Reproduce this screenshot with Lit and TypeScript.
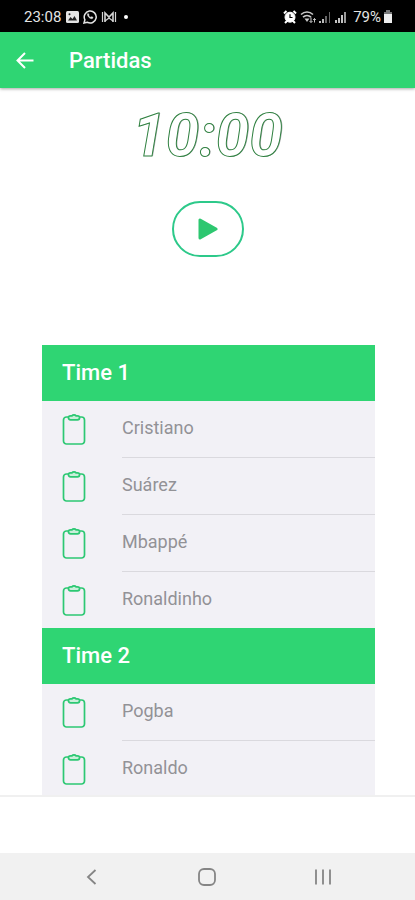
import { LitElement, html, css } from "lit";
import { customElement, property, state } from "lit/decorators.js";

interface Team {
  name: string;
  players: string[];
}

@customElement("status-bar")
class StatusBar extends LitElement {
  static styles = css`
    :host {
      display: flex;
      justify-content: space-between;
      align-items: center;
      flex: none;
      height: 32px;
      padding: 2px 22px 0 24px;
      box-sizing: border-box;
      background: #000;
      color: #e4e4e4;
      font-size: 15px;
      line-height: 16px;
    }
    .group {
      display: flex;
      align-items: center;
      gap: 4px;
    }
    .tight {
      gap: 2px;
    }
    svg {
      display: block;
    }
  `;

  render() {
    return html`
      <div class="group">
        <span>23:08</span>
        <svg width="14" height="14" viewBox="0 0 14 14">
          <rect x="1" y="1" width="13" height="12" rx="1.500" fill="#e4e4e4" />
          <path d="M3 10.500 5.500 7l2 2 2-3 2.500 4.500z" fill="#222" />
          <circle cx="4.500" cy="4.200" r="1" fill="#222" />
        </svg>
        <svg width="14" height="14" viewBox="0 0 14 14" fill="none" stroke="#e4e4e4">
          <path d="M1 13l.9-3.200A6 6 0 1 1 4.200 12.200z" stroke-width="1.500" />
          <path d="M4.600 3.800c.5-.6 1-.2 1.400 1.200-.8.8.9 2.500 2 2.100.8-.6 2 0 2 .7-1 2.600-6.400-1-5.400-4z" fill="#e4e4e4" stroke="#e4e4e4" stroke-width="0.500" />
        </svg>
        <svg width="16" height="12" viewBox="0 0 16 12" fill="none" stroke="#d4d4d4">
          <path d="M4 11V2l4 4 4-4v9" stroke-width="1.600" />
          <path d="M1.500 1v10M14.500 1v10M4 10l4-3 4 3" stroke-width="1.200" />
        </svg>
        <svg width="10" height="6" viewBox="0 0 10 6"><circle cx="5" cy="3" r="2" fill="#fff" /></svg>
      </div>
      <div class="group tight">
        <svg width="14" height="14" viewBox="0 0 14 14" fill="none" stroke="#fff">
          <circle cx="7" cy="7.200" r="5" fill="#fff" />
          <path d="M1 3.500 3.500 1M13 3.500 10.500 1M2 13l2-2M12 13 10 11" stroke-width="2" />
          <path d="M7 4.200v3.300h2.500" stroke="#000" stroke-width="1.200" />
        </svg>
        <svg width="18" height="14" viewBox="0 0 18 14" fill="none" stroke="#c8c8c8">
          <path d="M2 4.500c3.500-3.300 8.500-3.300 12 0M4 7.200c2.300-2.200 5.700-2.200 8 0" stroke-width="1.600" />
          <path d="M5.500 8.500h5L8 12z" fill="#c8c8c8" stroke="none" />
          <path d="M12 7.500v5M10.500 11l1.500 1.500 1.500-1.500M15.500 12.500v-4M14.200 10l1.300-1.500 1.300 1.500" />
        </svg>
        <svg width="12" height="12" viewBox="0 0 12 12">
          <path d="M0 10h2v2H0zM3 8h2v4H3z" fill="#bbb" />
          <path d="M6 5h2v7H6zM10 1h1v11h-1z" fill="#666" />
        </svg>
        <svg width="14" height="12" viewBox="0 0 14 12">
          <path d="M2 9h2v3H2zM5 7h2v5H5zM8 4h2v8H8z" fill="#c4c4c4" />
          <path d="M11 1h2v11h-2z" fill="#999" />
        </svg>
        <span>&nbsp;79%</span>
        <svg width="10" height="14" viewBox="0 0 10 14">
          <path d="M3 0h4v2h2v3H1V2h2z" fill="#777" />
          <path d="M1 4h8v9H1z" fill="#eee" />
        </svg>
      </div>
    `;
  }
}

@customElement("team-list")
class TeamList extends LitElement {
  @property({ attribute: false }) team!: Team;

  static styles = css`
    :host {
      display: block;
      background: #f2f1f6;
    }
    h2 {
      display: flex;
      align-items: center;
      height: 56px;
      margin: 0;
      padding: 0 20px;
      background: #2fd573;
      color: #fff;
      font-size: 22px;
      font-weight: 500;
      line-height: 26px;
    }
    ul {
      margin: 0;
      padding: 0;
      list-style: none;
    }
    li {
      display: flex;
      align-items: stretch;
      padding-left: 20px;
    }
    svg {
      display: block;
      flex: none;
      margin: 12px 36px 12px 0;
    }
    .name {
      display: flex;
      align-items: center;
      flex: 1;
      min-height: 54px;
      padding-bottom: 2px;
      color: #929296;
      font-size: 18px;
      line-height: 20px;
    }
    li:not(:last-child) .name {
      border-bottom: 1px solid #dad9de;
    }
  `;

  render() {
    return html`
      <h2>${this.team.name}</h2>
      <ul>
        ${this.team.players.map(
          (player) => html`
            <li>
              <svg width="24" height="32" viewBox="0 0 24 32" fill="none" stroke="#2dc873" stroke-width="1.700">
                <path d="M6.500 4H4.500a3 3 0 0 0-3 3v21a3 3 0 0 0 3 3h15a3 3 0 0 0 3-3V7a3 3 0 0 0-3-3h-2" />
                <path d="M8.500 2.800h1.500c.8-1.300 3.200-1.300 4 0h1.500c2.800 0 2.800 4 0 4h-7c-2.800 0-2.800-4 0-4z" fill="#c9efda" />
              </svg>
              <span class="name">${player}</span>
            </li>
          `
        )}
      </ul>
    `;
  }
}

@customElement("app-root")
class AppRoot extends LitElement {
  @state() private teams: Team[] = [
    { name: "Time 1", players: ["Cristiano", "Suárez", "Mbappé", "Ronaldinho"] },
    { name: "Time 2", players: ["Pogba", "Ronaldo"] },
  ];

  static styles = css`
    :host {
      display: flex;
      flex-direction: column;
      height: 100vh;
      background: #fff;
      font-family: Roboto, "Liberation Sans", sans-serif;
    }
    button {
      display: flex;
      align-items: center;
      justify-content: center;
      margin: 0;
      padding: 0;
      border: 0;
      background: none;
      cursor: pointer;
    }
    svg {
      display: block;
    }
    header {
      display: flex;
      align-items: center;
      flex: none;
      gap: 32px;
      height: 56px;
      padding: 0 12px;
      background: #2fd573;
      color: #fff;
      box-shadow: 0 1px 3px rgba(0, 0, 0, 0.35);
    }
    h1 {
      margin: 0;
      padding-top: 2px;
      font-size: 22px;
      font-weight: 500;
      line-height: 26px;
    }
    main {
      display: flex;
      flex-direction: column;
      flex: 1;
      min-height: 0;
      overflow: hidden auto;
      scrollbar-width: none;
    }
    .timer {
      flex: none;
      margin-top: 12px;
      color: #fff;
      font-size: 60px;
      font-style: italic;
      font-weight: 700;
      line-height: 72px;
      text-align: center;
      -webkit-text-stroke: 1px #2f8040;
      text-shadow: 1px 0 0 rgba(50, 50, 60, 0.4);
    }
    .play {
      flex: none;
      align-self: center;
      width: 72px;
      height: 56px;
      margin: 29px 0 88px;
      border: 2px solid #2dc98a;
      border-radius: 28px;
    }
    .teams {
      padding: 0 40px 0 42px;
    }
    .tabs {
      flex: none;
      height: 58px;
      border-top: 2px solid #f0f0f0;
      box-sizing: border-box;
    }
    nav {
      display: grid;
      grid-template-columns: repeat(3, 1fr);
      flex: none;
      height: 47px;
      padding: 0 34px;
      background: #f1f1f1;
    }
  `;

  render() {
    return html`
      <status-bar></status-bar>
      <header>
        <button aria-label="Voltar">
          <svg width="25" height="24" viewBox="0 0 25 24" fill="none" stroke="#fff" stroke-width="2">
            <path d="M21.500 12.500H6M13 5l-7.500 7.500L13 20" />
          </svg>
        </button>
        <h1>Partidas</h1>
      </header>
      <main>
        <div class="timer" role="timer">10:00</div>
        <button class="play" aria-label="Iniciar">
          <svg width="20" height="22" viewBox="0 0 20 22">
            <path d="M2 2v18L18 11z" fill="#2dc770" stroke="#2dc770" stroke-width="3" stroke-linejoin="round" />
          </svg>
        </button>
        <section class="teams">
          ${this.teams.map((team) => html`<team-list .team=${team}></team-list>`)}
        </section>
      </main>
      <div class="tabs"></div>
      <nav>
        <button aria-label="Anterior">
          <svg width="18" height="18" viewBox="0 0 18 18" fill="none" stroke="#858585" stroke-width="1.800">
            <path d="M12.500 2 5 9l7.500 7" />
          </svg>
        </button>
        <button aria-label="Início">
          <svg width="18" height="18" viewBox="0 0 18 18" fill="none" stroke="#858585" stroke-width="1.800">
            <rect x="1" y="1" width="16" height="16" rx="5" />
          </svg>
        </button>
        <button aria-label="Recentes">
          <svg width="18" height="18" viewBox="0 0 18 18" fill="none" stroke="#858585" stroke-width="1.800">
            <path d="M2 1.500v15M9 1.500v15M16 1.500v15" />
          </svg>
        </button>
      </nav>
    `;
  }
}
